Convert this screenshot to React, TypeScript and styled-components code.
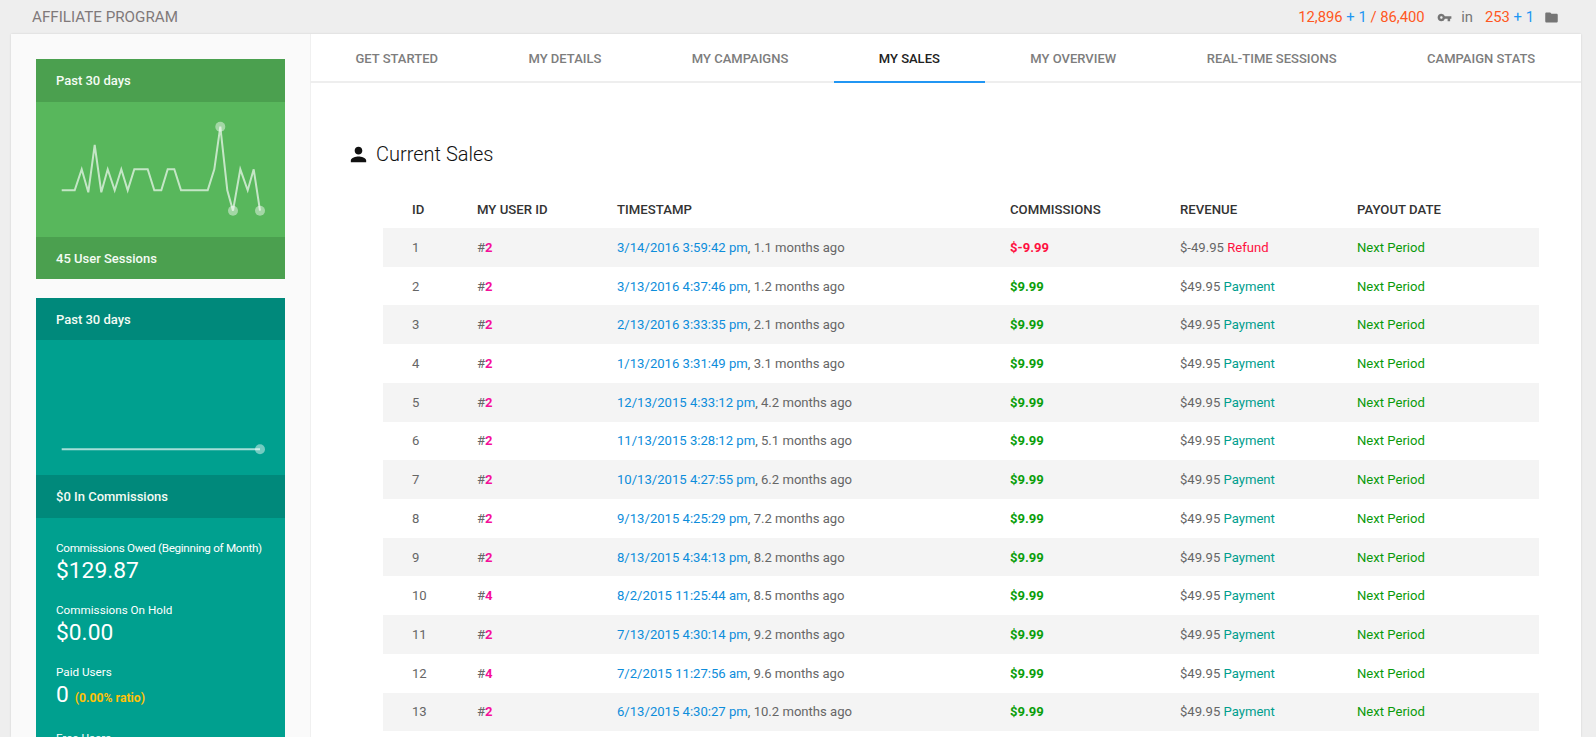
import React from 'react';
import styled, { createGlobalStyle } from 'styled-components';
import { MdFolder, MdPerson, MdVpnKey } from 'react-icons/md';

const GlobalStyle = createGlobalStyle`
  html, body {
    margin: 0;
    padding: 0;
    height: 100%;
    overflow: hidden;
    background: #eeeeee;
    font-family: Roboto, "Liberation Sans", sans-serif;
  }
  * { box-sizing: border-box; }
`;

const Page = styled.div`
  height: 737px;
  overflow: hidden;
`;

const TopBar = styled.header`
  height: 34px;
  padding: 0 37px 0 32px;
  display: flex;
  align-items: center;
  justify-content: space-between;
`;

const Brand = styled.div`
  font-size: 15.2px;
  color: #80797a;
  text-transform: uppercase;
`;

const Counters = styled.div`
  display: flex;
  align-items: center;
  font-size: 14.8px;
  color: #757575;
`;

const Orange = styled.span`
  color: #ff5722;
`;

const Blue = styled.span`
  color: #2196f3;
`;

const In = styled.span`
  margin: 0 12px 0 9px;
`;

const KeyIcon = styled(MdVpnKey)`
  margin-left: 12.5px;
  font-size: 15px;
  color: #757575;
`;

const FolderIcon = styled(MdFolder)`
  margin-left: 10px;
  font-size: 15px;
  color: #757575;
`;

const Card = styled.div`
  margin: 0 15px 0 11px;
  display: flex;
  background: #fff;
  box-shadow: 0 0 2px rgba(0, 0, 0, 0.12);
  height: 703px;
  overflow: hidden;
`;

const Sidebar = styled.aside`
  width: 300px;
  flex: none;
  padding: 25px 25px 0;
  background: #fafafa;
  border-right: 1px solid #f0f0f0;
`;

const Panel = styled.section<{ $bg: string }>`
  background: ${p => p.$bg};
  color: #fff;
  margin-bottom: 19px;
`;

const PanelBar = styled.div<{ $bg: string; $h: number }>`
  height: ${p => p.$h}px;
  padding: 0 20px;
  display: flex;
  align-items: center;
  background: ${p => p.$bg};
  font-size: 13px;
  font-weight: 500;
  color: #f4fbf4;
`;

const Chart = styled.svg`
  display: block;
  width: 249px;
  height: 135px;
`;

const Stats = styled.div`
  padding: 22px 20px 0;
`;

const Stat = styled.div`
  margin-bottom: 17px;
`;

const StatLabel = styled.div<{ $tight?: boolean }>`
  font-size: 11.7px;
  line-height: 16px;
  white-space: nowrap;
  letter-spacing: ${p => (p.$tight ? '-0.3px' : 'normal')};
`;

const StatValue = styled.div`
  font-size: 22.8px;
  line-height: 29px;
`;

const Ratio = styled.span`
  margin-left: 6px;
  font-size: 12.2px;
  font-weight: 700;
  color: #ffc107;
`;

const Main = styled.main`
  flex: 1;
  min-width: 0;
`;

const Tabs = styled.nav`
  display: flex;
  height: 49px;
  margin-left: -0.75px;
  border-bottom: 2px solid #eeeeee;
`;

const Tab = styled.div<{ $active?: boolean }>`
  height: 49px;
  padding: 2px 45.25px 0;
  display: flex;
  align-items: center;
  font-size: 13px;
  font-weight: 500;
  white-space: nowrap;
  color: ${p => (p.$active ? '#212121' : '#7d7d7d')};
  border-bottom: 2px solid ${p => (p.$active ? '#2196f3' : 'transparent')};
`;

const Content = styled.div`
  padding: 57px 42px 0 41px;
`;

const Heading = styled.h2`
  margin: 0;
  height: 28px;
  display: flex;
  align-items: center;
  gap: 6px;
  font-size: 20px;
  font-weight: 300;
  color: #111;
`;

const PersonIcon = styled(MdPerson)`
  margin-left: -5px;
  font-size: 23px;
  color: #111;
`;

const Table = styled.div`
  margin: 22px 0 0 31px;
`;

const Row = styled.div<{ $striped?: boolean }>`
  height: 38.72px;
  padding-left: 29px;
  display: grid;
  grid-template-columns: 65px 140px 393px 170px 177px 1fr;
  align-items: center;
  font-size: 13.1px;
  color: #666;
  background: ${p => (p.$striped ? '#f4f4f4' : 'transparent')};
`;

const HeadRow = styled(Row)`
  height: 38px;
  font-size: 13.2px;
  font-weight: 500;
  color: #333;
`;

const Pink = styled.b`
  color: #f5109a;
`;

const Link = styled.span`
  color: #0d8ddb;
`;

const Amount = styled.b<{ $neg?: boolean }>`
  color: ${p => (p.$neg ? '#ff1040' : '#0a9e0a')};
`;

const Kind = styled.span<{ $neg?: boolean }>`
  color: ${p => (p.$neg ? '#ff1040' : '#009e8e')};
`;

const Payout = styled.span`
  color: #0a9a0a;
`;

const trend: [number, number][] = [
  [25.7, 88.3], [38.7, 88.3], [45.7, 67.3], [52.3, 90.3], [58.7, 43], [65.3, 90.3], [71.7, 67.3],
  [78.7, 88.3], [85.3, 67.3], [91.7, 88.3], [98.3, 67.3], [111.7, 67.3], [118.3, 88.3], [125.3, 88.3],
  [131.7, 67.3], [138.3, 67.3], [145, 88.3], [171.7, 88.3], [178.3, 67.3], [184.3, 24.7], [191.3, 88.3],
  [197, 108.7], [204.3, 67.3], [211.7, 88.3], [217.7, 67.3], [224, 108.7],
];

const tabs = ['Get Started', 'My Details', 'My Campaigns', 'My Sales', 'My Overview', 'Real-Time Sessions', 'Campaign Stats'];

const sales = [
  ['2', '3/14/2016 3:59:42 pm', '1.1'],
  ['2', '3/13/2016 4:37:46 pm', '1.2'],
  ['2', '2/13/2016 3:33:35 pm', '2.1'],
  ['2', '1/13/2016 3:31:49 pm', '3.1'],
  ['2', '12/13/2015 4:33:12 pm', '4.2'],
  ['2', '11/13/2015 3:28:12 pm', '5.1'],
  ['2', '10/13/2015 4:27:55 pm', '6.2'],
  ['2', '9/13/2015 4:25:29 pm', '7.2'],
  ['2', '8/13/2015 4:34:13 pm', '8.2'],
  ['4', '8/2/2015 11:25:44 am', '8.5'],
  ['2', '7/13/2015 4:30:14 pm', '9.2'],
  ['4', '7/2/2015 11:27:56 am', '9.6'],
  ['2', '6/13/2015 4:30:27 pm', '10.2'],
];

const Sparkline: React.FC<{ points: [number, number][]; dots: [number, number][] }> = ({ points, dots }) => (
  <Chart viewBox="0 0 249 135">
    <polyline points={points.map(p => p.join(',')).join(' ')} fill="none" stroke="#fff" strokeOpacity={0.65} strokeWidth={2} />
    {dots.map(([x, y]) => (
      <circle key={x} cx={x} cy={y} r={5} fill="#fff" fillOpacity={0.45} />
    ))}
  </Chart>
);

const App: React.FC = () => {
  return (
    <Page>
      <GlobalStyle />
      <TopBar>
        <Brand>Affiliate Program</Brand>
        <Counters>
          <Orange>12,896</Orange>&nbsp;<Blue>+ 1</Blue>&nbsp;<Orange>/ 86,400</Orange>
          <KeyIcon />
          <In>in</In>
          <Orange>253</Orange>&nbsp;<Blue>+ 1</Blue>
          <FolderIcon />
        </Counters>
      </TopBar>
      <Card>
        <Sidebar>
          <Panel $bg="#58b75c">
            <PanelBar $bg="#4ba04f" $h={43}>Past 30 days</PanelBar>
            <Sparkline points={trend} dots={[[184.3, 24.7], [197, 108.7], [224, 108.7]]} />
            <PanelBar $bg="#4ba04f" $h={42}>45 User Sessions</PanelBar>
          </Panel>
          <Panel $bg="#00a08f">
            <PanelBar $bg="#00897b" $h={42}>Past 30 days</PanelBar>
            <Sparkline points={[[25.7, 109.3], [224, 109.3]]} dots={[[224, 109.3]]} />
            <PanelBar $bg="#00897b" $h={43}>$0 In Commissions</PanelBar>
            <Stats>
              <Stat>
                <StatLabel $tight>Commissions Owed (Beginning of Month)</StatLabel>
                <StatValue>$129.87</StatValue>
              </Stat>
              <Stat>
                <StatLabel>Commissions On Hold</StatLabel>
                <StatValue>$0.00</StatValue>
              </Stat>
              <Stat>
                <StatLabel>Paid Users</StatLabel>
                <StatValue>0<Ratio>(0.00% ratio)</Ratio></StatValue>
              </Stat>
              <Stat>
                <StatLabel>Free Users</StatLabel>
                <StatValue>2</StatValue>
              </Stat>
            </Stats>
          </Panel>
        </Sidebar>
        <Main>
          <Tabs>
            {tabs.map(t => (
              <Tab key={t} $active={t === 'My Sales'}>{t.toUpperCase()}</Tab>
            ))}
          </Tabs>
          <Content>
            <Heading><PersonIcon />Current Sales</Heading>
            <Table>
              <HeadRow>
                <span>ID</span>
                <span>MY USER ID</span>
                <span>TIMESTAMP</span>
                <span>COMMISSIONS</span>
                <span>REVENUE</span>
                <span>PAYOUT DATE</span>
              </HeadRow>
              {sales.map(([user, stamp, age], i) => {
                const refund = i === 0;
                return (
                  <Row key={stamp} $striped={i % 2 === 0}>
                    <span>{i + 1}</span>
                    <span>#<Pink>{user}</Pink></span>
                    <span><Link>{stamp}</Link>, {age} months ago</span>
                    <Amount $neg={refund}>{refund ? '$-9.99' : '$9.99'}</Amount>
                    <span>{refund ? '$-49.95' : '$49.95'} <Kind $neg={refund}>{refund ? 'Refund' : 'Payment'}</Kind></span>
                    <Payout>Next Period</Payout>
                  </Row>
                );
              })}
            </Table>
          </Content>
        </Main>
      </Card>
    </Page>
  );
};

export default App;
